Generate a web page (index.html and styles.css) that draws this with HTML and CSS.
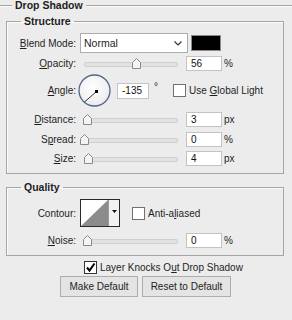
FILE: index.html
```html
<!DOCTYPE html>
<html lang="en">
<head>
    <meta charset="UTF-8">
    <title>Drop Shadow</title>
    <link rel="stylesheet" href="styles.css">
</head>
<body>
    <div class="title">
        <span class="rule rule-short"></span>
        <span class="title-text">Drop Shadow</span>
        <span class="rule"></span>
    </div>

    <div class="panel">
        <fieldset class="group group-structure">
            <legend>Structure</legend>

            <div class="row row-blend">
                <label class="lbl"><u>B</u>lend Mode:</label>
                <div class="select">
                    <span>Normal</span>
                    <svg class="chev" width="8" height="5" viewBox="0 0 8 5"><path d="M0.5 0.5 L4 4 L7.5 0.5" fill="none" stroke="#333" stroke-width="1.2"/></svg>
                </div>
                <div class="swatch"></div>
            </div>

            <div class="row row-opacity">
                <label class="lbl"><u>O</u>pacity:</label>
                <div class="slider">
                    <div class="track"></div>
                    <svg class="thumb" style="left: 52px" width="9" height="11" viewBox="0 0 9 11"><path d="M0.5 10.5 V4.5 L4.5 0.5 L8.5 4.5 V10.5 Z" fill="#f4f4f4" stroke="#8a8a8a"/></svg>
                </div>
                <div class="field">56</div>
                <span class="unit">%</span>
            </div>

            <div class="row row-angle">
                <label class="lbl"><u>A</u>ngle:</label>
                <svg class="dial" width="33" height="33" viewBox="0 0 33 33">
                    <defs>
                        <radialGradient id="dialfill" cx="0.45" cy="0.4" r="0.6">
                            <stop offset="0" stop-color="#ffffff"/>
                            <stop offset="1" stop-color="#ececec"/>
                        </radialGradient>
                    </defs>
                    <circle cx="16.5" cy="16.5" r="15.5" fill="url(#dialfill)" stroke="#52658c" stroke-width="1.3"/>
                    <line x1="18.5" y1="17.5" x2="6.5" y2="28" stroke="#333" stroke-width="1"/>
                    <rect x="17" y="16" width="3" height="3" fill="#000"/>
                </svg>
                <div class="field field-angle">-135</div>
                <span class="deg">°</span>
                <span class="check"></span>
                <span class="check-text">Use <u>G</u>lobal Light</span>
            </div>

            <div class="row row-distance">
                <label class="lbl"><u>D</u>istance:</label>
                <div class="slider">
                    <div class="track"></div>
                    <svg class="thumb" style="left: 3px" width="9" height="11" viewBox="0 0 9 11"><path d="M0.5 10.5 V4.5 L4.5 0.5 L8.5 4.5 V10.5 Z" fill="#f4f4f4" stroke="#8a8a8a"/></svg>
                </div>
                <div class="field">3</div>
                <span class="unit">px</span>
            </div>

            <div class="row row-spread">
                <label class="lbl">S<u>p</u>read:</label>
                <div class="slider">
                    <div class="track"></div>
                    <svg class="thumb" style="left: 0px" width="9" height="11" viewBox="0 0 9 11"><path d="M0.5 10.5 V4.5 L4.5 0.5 L8.5 4.5 V10.5 Z" fill="#f4f4f4" stroke="#8a8a8a"/></svg>
                </div>
                <div class="field">0</div>
                <span class="unit">%</span>
            </div>

            <div class="row row-size">
                <label class="lbl"><u>S</u>ize:</label>
                <div class="slider">
                    <div class="track"></div>
                    <svg class="thumb" style="left: 4px" width="9" height="11" viewBox="0 0 9 11"><path d="M0.5 10.5 V4.5 L4.5 0.5 L8.5 4.5 V10.5 Z" fill="#f4f4f4" stroke="#8a8a8a"/></svg>
                </div>
                <div class="field">4</div>
                <span class="unit">px</span>
            </div>
        </fieldset>

        <fieldset class="group group-quality">
            <legend>Quality</legend>

            <div class="row row-contour">
                <label class="lbl">Contour:</label>
                <div class="contour">
                    <svg class="curve" width="27" height="26" viewBox="0 0 27 26"><rect width="27" height="26" fill="#fff"/><path d="M0 26 L27 0 V26 Z" fill="#8c8c8c"/></svg>
                    <span class="contour-arrow">
                        <svg width="5" height="3" viewBox="0 0 5 3"><path d="M0 0 H5 L2.5 3 Z" fill="#111"/></svg>
                    </span>
                </div>
                <span class="check check-aa"></span>
                <span class="check-text">Anti-a<u>l</u>iased</span>
            </div>

            <div class="row row-noise">
                <label class="lbl"><u>N</u>oise:</label>
                <div class="slider">
                    <div class="track"></div>
                    <svg class="thumb" style="left: 3px" width="9" height="11" viewBox="0 0 9 11"><path d="M0.5 10.5 V4.5 L4.5 0.5 L8.5 4.5 V10.5 Z" fill="#f4f4f4" stroke="#8a8a8a"/></svg>
                </div>
                <div class="field">0</div>
                <span class="unit">%</span>
            </div>
        </fieldset>

        <div class="knock">
            <span class="check check-on">
                <svg width="11" height="11" viewBox="0 0 11 11"><path d="M2 5.5 L4.5 8.5 L9.5 1.5" fill="none" stroke="#000" stroke-width="2"/></svg>
            </span>
            <span class="check-text">Layer Knocks O<u>u</u>t Drop Shadow</span>
        </div>

        <div class="buttons">
            <button class="btn btn-make">Make Default</button>
            <button class="btn btn-reset">Reset to Default</button>
        </div>
    </div>
</body>
</html>
```

FILE: styles.css
```css
body {
    margin: 0;
    background: #ececec;
    font-family: 'Liberation Sans', Arial, sans-serif;
    font-size: 10px;
    color: #1e1e1e;
}
u {
    text-decoration: underline;
    text-underline-offset: 1px;
}
.title {
    display: flex;
    align-items: center;
    height: 11px;
}
.rule {
    flex: 1;
    border-top: 1px solid #a5a5a5;
    border-bottom: 1px solid #fbfbfb;
}
.rule-short {
    flex: 0 0 12px;
}
.title-text {
    font-weight: 700;
    font-size: 10.5px;
    padding: 0 3px;
    line-height: 11px;
}
.panel {
    padding: 4px 8px 0 6px;
}
.group {
    margin: 0;
    padding: 6px 0 7px;
    border: 1px solid #a5a5a5;
    box-shadow: inset 1px 1px 0 #fbfbfb;
    min-width: 0;
}
.group legend {
    font-weight: 700;
    font-size: 10.5px;
    line-height: 12px;
    padding: 0 3px;
    margin-left: 14px;
}
.group-quality {
    margin-top: 7px;
}
.row {
    display: flex;
    align-items: center;
}
.lbl {
    width: 69px;
    text-align: right;
    flex: none;
    margin-right: 4px;
}
.row-blend {
    height: 20px;
}
.row-opacity {
    height: 15px;
    margin-top: 3px;
}
.row-angle {
    height: 33px;
    margin-top: 3px;
}
.row-distance {
    height: 15px;
    margin-top: 5px;
}
.row-spread {
    height: 15px;
    margin-top: 5px;
}
.row-size {
    height: 15px;
    margin-top: 4px;
}
.select {
    background: #fff;
    border: 1px solid #acacac;
    display: flex;
    align-items: center;
    justify-content: space-between;
    padding: 0 5px 0 3px;
    box-sizing: border-box;
    width: 108px;
    height: 20px;
    font-size: 10.5px;
}
.chev {
    display: block;
}
.swatch {
    width: 30px;
    height: 16px;
    box-sizing: border-box;
    margin-left: 3px;
    background: #000;
    border: 1px solid #8a8a8a;
}
.slider {
    position: relative;
    width: 102px;
    height: 15px;
    margin-right: 4px;
}
.track {
    position: absolute;
    left: 4px;
    right: 4px;
    top: 6px;
    height: 3px;
    background: #e2e2e2;
    border: 1px solid #cfcfcf;
    border-radius: 2px;
}
.thumb {
    position: absolute;
    top: 2px;
}
.field {
    width: 36px;
    height: 15px;
    box-sizing: border-box;
    background: #fff;
    border: 1px solid #c3c3c3;
    padding-left: 4px;
    line-height: 13px;
    color: #111;
}
.unit {
    margin-left: 2px;
}
.dial {
    display: block;
    margin-left: -2px;
    margin-right: 6px;
}
.field-angle {
    width: 32px;
    height: 16px;
    line-height: 14px;
}
.deg {
    align-self: flex-start;
    margin: 7px 0 0 5px;
    width: 19px;
}
.check {
    width: 13px;
    height: 13px;
    box-sizing: border-box;
    background: #fff;
    border: 1px solid #707070;
    flex: none;
    display: flex;
    align-items: center;
    justify-content: center;
}
.check-text {
    margin-left: 3px;
}
.row-contour {
    height: 28px;
}
.contour {
    display: flex;
    width: 40px;
    height: 28px;
    box-sizing: border-box;
    border: 1px solid #2a2a2a;
    margin-right: 12px;
}
.curve {
    display: block;
}
.contour-arrow {
    flex: 1;
    border-left: 1px solid #9a9a9a;
    background: #f2f2f2;
    display: flex;
    align-items: center;
    justify-content: center;
    padding-bottom: 3px;
}
.contour-arrow svg {
    display: block;
}
.row-noise {
    height: 15px;
    margin-top: 6px;
}
.knock {
    display: flex;
    align-items: center;
    height: 13px;
    margin: 5px 0 0 78px;
}
.check-on {
    border-color: #333;
}
.check-on svg {
    display: block;
}
.buttons {
    display: flex;
    gap: 4px;
    margin: 2px 0 0 54px;
}
.btn {
    height: 21px;
    padding: 0;
    font-family: inherit;
    font-size: 10px;
    color: #1e1e1e;
    background: #e4e4e4;
    border: 1px solid #adadad;
}
.btn-make {
    width: 78px;
}
.btn-reset {
    width: 89px;
}
```
